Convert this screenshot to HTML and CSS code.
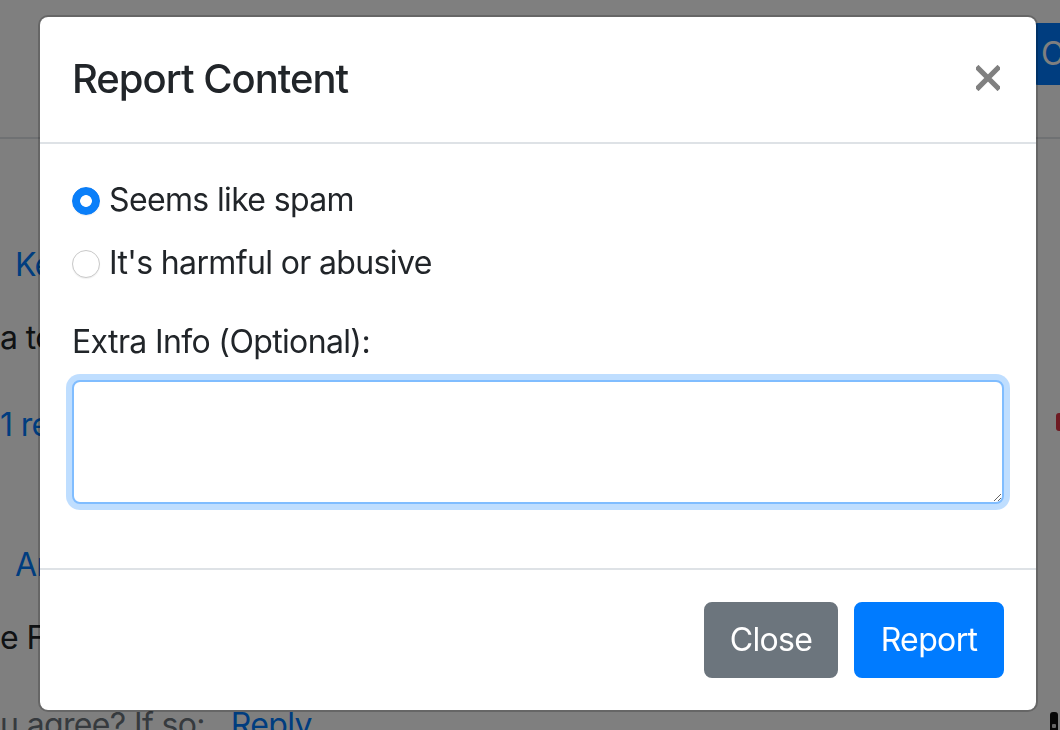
FILE: index.html
```html
<!DOCTYPE html>
<html lang="en">
<head>
<meta charset="utf-8">
<title>Report Content</title>
<link rel="stylesheet" href="styles.css">
</head>
<body>
<div class="page">
  <header class="topbar">
    <div class="brand"></div>
    <button class="create-btn" type="button">Create</button>
  </header>
  <main class="feed">
    <article class="post">
      <a class="author" href="#">Kevin</a>
      <p class="post-text">a to</p>
      <div class="post-actions">
        <a class="replies" href="#">1 reply</a>
        <span class="flag-btn"></span>
      </div>
    </article>
    <article class="post post-second">
      <a class="author" href="#">Ari</a>
      <p class="post-text">e F</p>
      <div class="post-actions">
        <span class="prompt">u agree? If so:</span>
        <a class="reply-link" href="#">Reply</a>
        <span class="mini-icon"><span class="mini-dot"></span></span>
      </div>
    </article>
  </main>
</div>

<div class="backdrop"></div>

<div class="modal" role="dialog" aria-labelledby="reportTitle">
  <div class="modal-content">
    <div class="modal-header">
      <h5 class="modal-title" id="reportTitle">Report Content</h5>
      <button class="close" type="button" aria-label="Close">
        <svg width="24" height="26" viewBox="0 0 24 26" aria-hidden="true">
          <path d="M2.5 3.5 L21.5 22.5 M21.5 3.5 L2.5 22.5" stroke="#808080" stroke-width="5.2" stroke-linecap="square" fill="none"/>
        </svg>
      </button>
    </div>
    <div class="modal-body">
      <div class="form-group">
        <label class="form-check"><input class="radio" type="radio" name="reason" checked><span>Seems like spam</span></label>
        <label class="form-check"><input class="radio" type="radio" name="reason"><span>It's harmful or abusive</span></label>
      </div>
      <div class="form-group">
        <label class="field-label" for="extraInfo">Extra Info (Optional):</label>
        <textarea class="form-control" id="extraInfo" rows="2"></textarea>
      </div>
    </div>
    <div class="modal-footer">
      <button class="btn btn-secondary" type="button">Close</button>
      <button class="btn btn-primary" type="button">Report</button>
    </div>
  </div>
</div>
</body>
</html>
```

FILE: styles.css
```css
html, body {
  margin: 0;
  padding: 0;
  overflow: hidden;
  width: 1060px;
  height: 730px;
}

body {
  font-family: Inter, "Noto Sans", "Liberation Sans", sans-serif;
  font-size: 32px;
  line-height: 48px;
  letter-spacing: -0.02em;
  color: #212529;
  background: #ffffff;
}

/* ---------- background page ---------- */
.page {
  width: 1100px;
}

.topbar {
  display: grid;
  grid-template-columns: 1030px auto;
  align-items: start;
  height: 114px;
  padding-top: 23px;
  border-bottom: 2px solid #dee2e6;
}

.create-btn {
  height: 62px;
  padding: 0 12px 0 11px;
  border: 0;
  border-radius: 8px;
  background: #007bff;
  color: #ffffff;
  font: inherit;
  letter-spacing: inherit;
  line-height: 62px;
  text-align: left;
}

.feed {
  width: 1100px;
}

.post {
  margin-top: 102px;
}

.post-second {
  margin-top: 92px;
}

.author {
  display: block;
  padding-left: 15px;
  color: #007bff;
  text-decoration: none;
}

.post-text {
  margin: 25px 0 0;
}

.post-actions {
  display: flex;
  align-items: center;
  margin-top: 39px;
  height: 48px;
}

.replies,
.reply-link {
  color: #007bff;
  text-decoration: none;
}

.prompt {
  color: #6c757d;
  margin-right: 26px;
}

.flag-btn {
  width: 30px;
  height: 18px;
  margin-left: auto;
  margin-right: 14px;
  margin-top: -6px;
  background: #dc3545;
  border-radius: 3px;
}

.mini-icon {
  position: relative;
  align-self: flex-start;
  width: 8px;
  height: 30px;
  margin-top: 11px;
  margin-left: auto;
  margin-right: 42px;
  background: #111111;
  border-radius: 3px;
}

.mini-dot {
  position: absolute;
  left: 2px;
  top: 12px;
  width: 4px;
  height: 4px;
  background: #cccccc;
  border-radius: 1px;
}

/* ---------- backdrop ---------- */
.backdrop {
  position: fixed;
  inset: 0;
  background: rgba(0, 0, 0, 0.5);
}

/* ---------- modal ---------- */
.modal {
  position: fixed;
  top: 15px;
  left: 38px;
  width: 1000px;
}

.modal-content {
  display: flex;
  flex-direction: column;
  background: #ffffff;
  background-clip: padding-box;
  border: 2px solid rgba(0, 0, 0, 0.2);
  border-radius: 10px;
}

.modal-header {
  display: flex;
  align-items: flex-start;
  justify-content: space-between;
  padding: 32px 32px 33px;
  border-bottom: 2px solid #dee2e6;
}

.modal-title {
  margin: 0;
  font-size: 40px;
  font-weight: 500;
  line-height: 60px;
  letter-spacing: -0.025em;
  color: #212529;
}

.close {
  display: block;
  width: 24px;
  height: 26px;
  margin: 16px 4px 0 0;
  padding: 0;
  border: 0;
  background: transparent;
}

.close svg {
  display: block;
}

.modal-body {
  padding: 32px 32px;
}

.form-group {
  margin-bottom: 32px;
}

.form-group:first-child {
  margin-bottom: 31px;
}

.form-check {
  display: flex;
  align-items: center;
  gap: 9px;
  height: 48px;
}

.form-check + .form-check {
  margin-top: 15px;
}

.radio {
  appearance: none;
  -webkit-appearance: none;
  flex: none;
  width: 28px;
  height: 28px;
  margin: 2px 0 0 0;
  border-radius: 50%;
  border: 1px solid #c9c9c9;
  background: #ffffff;
  box-shadow: 0 1px 1px rgba(0, 0, 0, 0.06);
}

.radio:checked {
  border-color: #0a7bf5;
  background: radial-gradient(circle, #ffffff 0 5.5px, #0a7ff9 6.2px);
}

.field-label {
  display: block;
  margin-bottom: 14px;
}

.form-control {
  display: block;
  box-sizing: border-box;
  width: 100%;
  height: 124px;
  margin: 0;
  padding: 12px 24px;
  font: inherit;
  color: #495057;
  background: #ffffff;
  border: 2px solid #80bdff;
  border-radius: 8px;
  box-shadow: 0 0 0 6px rgba(0, 123, 255, 0.25);
  outline: none;
  resize: vertical;
}

.modal-footer {
  display: flex;
  align-items: center;
  justify-content: flex-end;
  padding: 24px;
  border-top: 2px solid #dee2e6;
}

.btn {
  display: block;
  height: 76px;
  margin: 8px;
  padding: 12px 0;
  font: inherit;
  letter-spacing: inherit;
  line-height: 48px;
  color: #ffffff;
  text-align: center;
  border: 2px solid transparent;
  border-radius: 8px;
}

.btn-secondary {
  width: 134px;
  background: #6c757d;
  border-color: #6c757d;
}

.btn-primary {
  width: 150px;
  background: #007bff;
  border-color: #007bff;
}
```
